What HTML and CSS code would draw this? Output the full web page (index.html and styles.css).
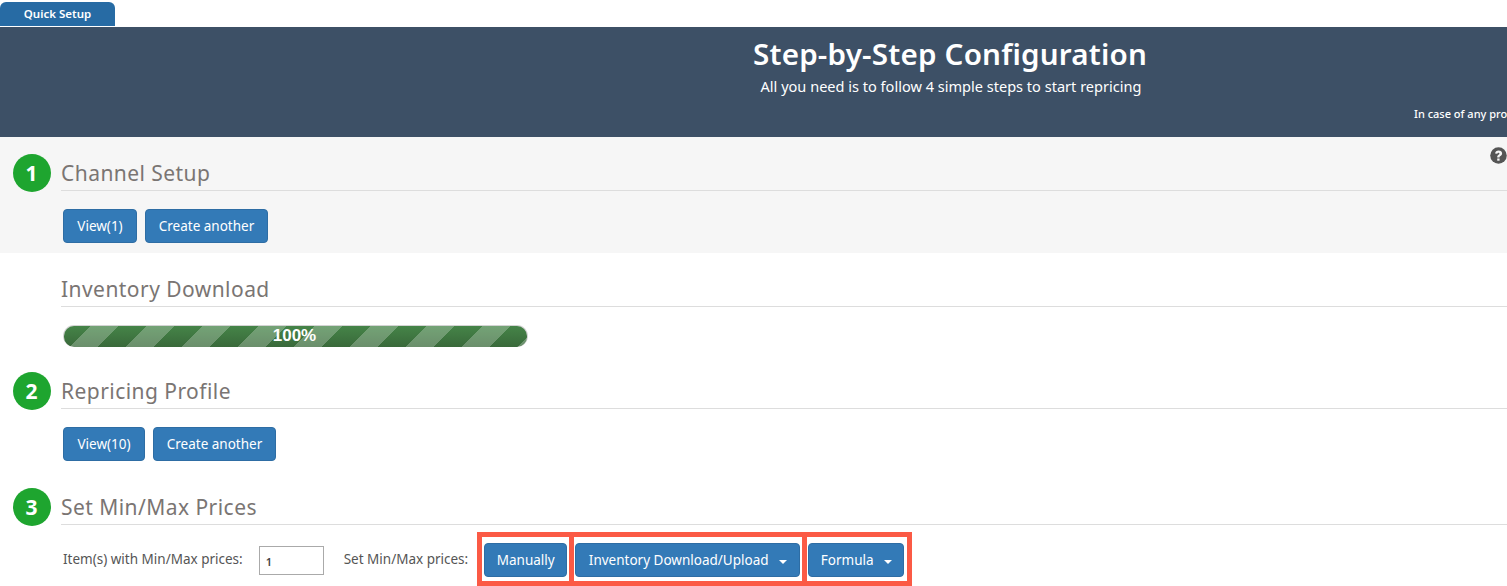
FILE: index.html
```html
<!DOCTYPE html>
<html lang="en">
<head>
<meta charset="utf-8">
<title>Quick Setup</title>
<link rel="stylesheet" href="styles.css">
</head>
<body>
<div class="tabs"><a class="tab">Quick Setup</a></div>
<header class="hero">
  <h1>Step-by-Step Configuration</h1>
  <p class="sub">All you need is to follow 4 simple steps to start repricing</p>
  <p class="note">In case of any problem</p>
</header>
<main>
  <section class="step step-one">
    <div class="help"><svg viewBox="0 0 16 16" width="17" height="17"><circle cx="8" cy="8" r="7.8" fill="#555"/><path d="M4.800 6.200C4.900 4.300 6.300 3.200 8.100 3.200c2 0 3.300 1.200 3.300 2.800 0 1.200-.7 1.900-1.500 2.400-.7.400-.9.700-.9 1.200v.2H6.800v-.5c0-1 .4-1.600 1.200-2.100.6-.4.9-.7.9-1.200S8.500 5.300 8 5.300c-.7 0-1 .4-1.100 1z" fill="#f6f6f6"/><rect x="6.800" y="10.800" width="2.200" height="2.100" fill="#f6f6f6"/></svg></div>
    <div class="head"><span class="num">1</span><h2>Channel Setup</h2></div>
    <div class="actions"><button class="btn btn-view">View(1)</button><button class="btn btn-new">Create another</button></div>
  </section>
  <section class="step step-inv">
    <div class="head"><h2>Inventory Download</h2></div>
    <div class="progress"><div class="bar">100%</div></div>
  </section>
  <section class="step step-two">
    <div class="head"><span class="num">2</span><h2>Repricing Profile</h2></div>
    <div class="actions"><button class="btn btn-view-wide">View(10)</button><button class="btn btn-new">Create another</button></div>
  </section>
  <section class="step step-three">
    <div class="head"><span class="num">3</span><h2>Set Min/Max Prices</h2></div>
    <div class="form-row">
      <label class="lbl">Item(s) with Min/Max prices:</label>
      <input class="count" type="text" value="1">
      <span class="lbl lbl-set">Set Min/Max prices:</span>
      <div class="marked">
        <div class="cell"><button class="btn btn-m">Manually</button></div>
        <div class="cell cell-i"><button class="btn btn-i">Inventory Download/Upload<i class="caret"></i></button></div>
        <div class="cell cell-f"><button class="btn btn-f">Formula<i class="caret"></i></button></div>
      </div>
    </div>
  </section>
</main>
</body>
</html>
```

FILE: styles.css
```css
* { box-sizing: border-box; }
html, body { margin: 0; height: 586px; overflow: hidden; background: #fff; }
body { font-family: "Noto Sans", "Open Sans", sans-serif; font-size: 14px; color: #555; }

.tabs { height: 27px; padding-top: 2px; }
.tab { display: block; width: 115px; height: 24px; background: #276ba4; color: #fff; border-radius: 6px 6px 0 0;
  font-size: 11.500px; font-weight: 600; line-height: 24px; text-align: center; }

.hero { width: 1900px; height: 110px; background: #3d5066; color: #fff; text-align: center; padding-top: 9px; }
.hero h1 { margin: 0; font-size: 29.600px; font-weight: 600; line-height: 36px; letter-spacing: 0.2px; }
.sub { margin: 4px 0 0; padding-left: 2px; font-size: 14.550px; line-height: 20px; }
.note { margin: 11px 0 0; padding-left: 1414px; font-size: 11px; font-weight: 500; line-height: 14px; text-align: left; }

.step { position: relative; }
.step-one { height: 116px; background: #f6f6f6; padding-top: 17px; }
.step-inv { height: 119px; padding-top: 17px; }
.step-two { height: 116px; }

.head { position: relative; height: 37px; margin-left: 61px; border-bottom: 1px solid #ddd; }
.head h2 { margin: 0; font-size: 21px; font-weight: 400; line-height: 38px; color: #7a7573; letter-spacing: 0.45px; }
.num { position: absolute; left: -48px; top: 0; width: 38px; height: 38px; border-radius: 50%; background: #1ea52f;
  color: #fff; font-size: 21px; font-weight: 700; line-height: 38px; text-align: center; text-indent: -1px; }

.help { position: absolute; right: 0; top: 10px; width: 17px; height: 17px; }
.help svg { display: block; }

.actions { display: flex; gap: 8px; margin: 18px 0 0 63px; }
.btn { height: 34px; padding: 2px 13px 0; border: 1px solid #2e6da4; border-radius: 4px; background: #337ab7; color: #fff;
  font-family: inherit; font-size: 13.500px; line-height: 1; white-space: nowrap; }
.btn-view { width: 74px; padding-left: 0; padding-right: 0; }
.btn-view-wide { width: 82px; padding-left: 0; padding-right: 0; }
.btn-new { width: 123px; padding-left: 0; padding-right: 0; }

.progress { width: 465px; height: 22px; margin: 18px 0 0 63px; border-radius: 11px; background: #d4d4d4; padding: 1px 1px 0; overflow: hidden; }
.bar { height: 21px; border-radius: 10px; color: #fff; font-family: "Liberation Sans", sans-serif; font-size: 17px; font-weight: 700;
  line-height: 20px; text-align: center; text-indent: -2px;
  background-color: #3f763e;
  background-image: linear-gradient(135deg, rgba(255,255,255,.25) 25%, transparent 25%, transparent 50%, rgba(255,255,255,.25) 50%, rgba(255,255,255,.25) 75%, transparent 75%, transparent), linear-gradient(#458448, #39693a);
  background-size: 56px 56px, 100% 100%;
  background-position: 26px 0, 0 0; }

.form-row { display: flex; align-items: center; height: 54px; margin: 7px 0 0 63px; }
.lbl { font-size: 13.500px; color: #555; white-space: nowrap; }
.count { width: 65px; height: 29px; margin: 2px 0 0 16px; padding: 3px 6px 0; border: 1px solid #aaa; font-family: inherit; font-size: 11px; font-weight: 600; color: #444; background: #fff; outline: none; }
.lbl-set { margin-left: 20px; }
.marked { display: flex; gap: 5px; margin-left: 9px; padding: 5px; background: #fb5a45; }
.cell { height: 44px; padding: 6px 2px 0; background: #fff; }
.cell-i { width: 228px; }
.cell-f { width: 100px; }
.btn-m { width: 83px; padding-left: 0; padding-right: 0; }
.btn-i { width: 225px; padding-left: 0; padding-right: 0; margin-left: -1px; }
.btn-f { width: 96px; padding-left: 0; padding-right: 0; margin-left: -1px; }
.caret { display: inline-block; width: 0; height: 0; margin-left: 10px; vertical-align: middle; border-top: 4px solid #fff; border-left: 4px solid transparent; border-right: 4px solid transparent; }
```
